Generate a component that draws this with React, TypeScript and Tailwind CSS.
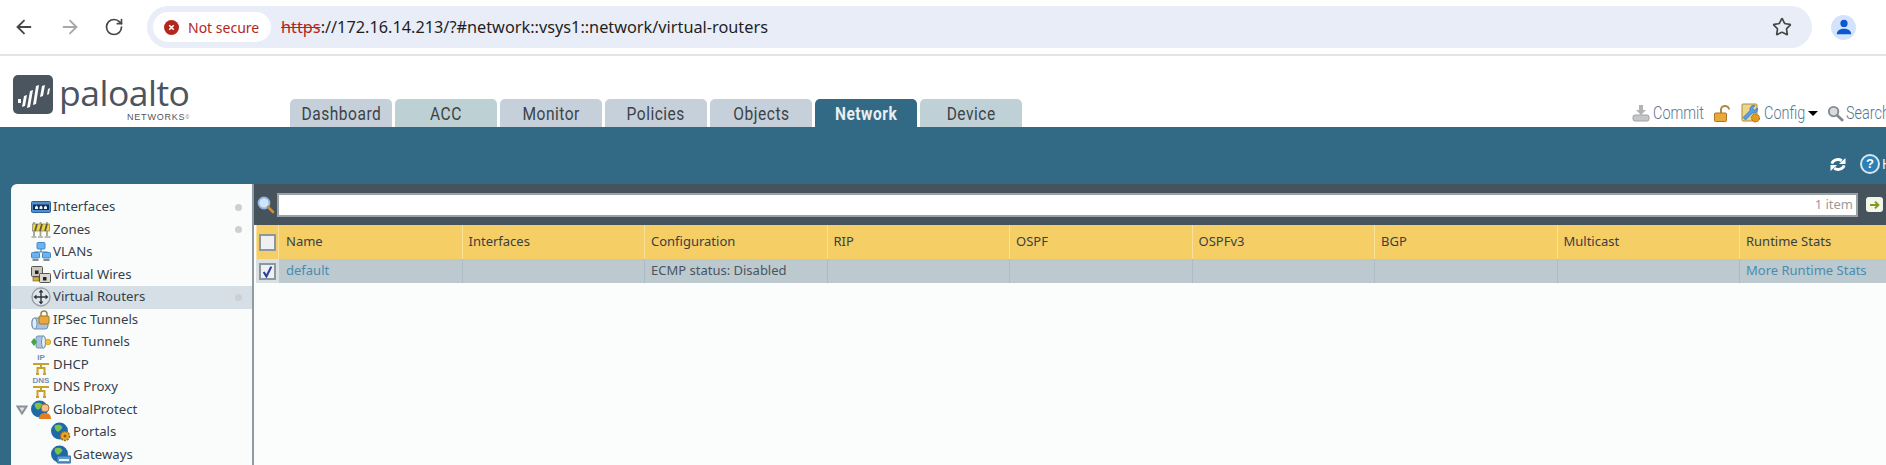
import type { ReactNode } from "react";
import { ArrowLeft, ArrowRight, RotateCw, Star } from "lucide-react";

const tabs = [
  { label: "Dashboard", bg: "bg-[#c5d0da]" },
  { label: "ACC", bg: "bg-[#bdd0d4]" },
  { label: "Monitor", bg: "bg-[#c5d0da]" },
  { label: "Policies", bg: "bg-[#c5d0da]" },
  { label: "Objects", bg: "bg-[#c5d0da]" },
  { label: "Network", bg: "bg-[#326985]", active: true },
  { label: "Device", bg: "bg-[#bfd0d6]" },
];

const columns = ["Interfaces", "Configuration", "RIP", "OSPF", "OSPFv3", "BGP", "Multicast", "Runtime Stats"];

function InterfacesIcon() {
  return (
    <svg viewBox="0 0 20 12" className="h-[12px] w-[20px]">
      <rect x="0.5" y="0.5" width="19" height="11" rx="1" fill="#4f8fd0" stroke="#2a5f9c" />
      <rect x="2" y="3.5" width="16" height="5.5" fill="#0f2d55" />
      <path d="M4 8V6l1.500-1.500L7 6v2zM8.500 8V6L10 4.500 11.500 6v2zM13 8V6l1.500-1.500L16 6v2z" fill="#eef3f8" />
    </svg>
  );
}

function ZonesIcon() {
  return (
    <svg viewBox="0 0 20 17" className="h-[17px] w-[20px]">
      <path d="M3 1v14M9.500 1v14M16 1v14" stroke="#a3a38e" strokeWidth="1.800" />
      <rect x="1.500" y="3" width="17" height="7" fill="#f0d43e" stroke="#8d8d78" strokeWidth="0.800" />
      <path d="M6 3 4 10M11 3 9 10M16 3l-2 7" stroke="#5a5a4c" strokeWidth="1.800" />
      <path d="M0.500 16h5M7 16h5M13.500 16h6" stroke="#a8a896" strokeWidth="1.600" />
    </svg>
  );
}

function VlansIcon() {
  return (
    <svg viewBox="0 0 20 20" className="h-[20px] w-[20px]">
      <path d="M10 6v4M4 13v-3h12v3" stroke="#5a7ea8" strokeWidth="1.200" fill="none" />
      <rect x="6" y="0.500" width="8" height="6.500" rx="1" fill="#6bb4f0" stroke="#4488c8" />
      <rect x="0.500" y="10.500" width="8" height="5.500" rx="1" fill="#6bb4f0" stroke="#4488c8" />
      <rect x="11.500" y="10.500" width="8" height="5.500" rx="1" fill="#6bb4f0" stroke="#4488c8" />
      <path d="M1.500 18h6M12.500 18h6" stroke="#8a8a8a" strokeWidth="1.800" />
    </svg>
  );
}

function WiresIcon() {
  return (
    <svg viewBox="0 0 20 17" className="h-[17px] w-[20px]">
      <rect x="0.500" y="0.500" width="11" height="10" rx="1" fill="#c8c8c0" stroke="#55554f" />
      <rect x="8.500" y="7.500" width="11" height="9" rx="1" fill="#d8d8d0" stroke="#55554f" />
      <path d="M4 8V4.500h3.500V8z" fill="#222" />
      <path d="M12 14.500V11h3.500v3.500z" fill="#222" />
      <rect x="2" y="11" width="6" height="4" fill="#d8ae3c" stroke="#6b5a20" strokeWidth="0.600" />
    </svg>
  );
}

function RoutersIcon() {
  return (
    <svg viewBox="0 0 20 20" className="h-[20px] w-[20px]">
      <circle cx="10" cy="10" r="9" fill="#e3e7ea" stroke="#98a2ab" strokeWidth="1.400" />
      <path d="M10 4v12M4 10h12" stroke="#2a3742" strokeWidth="1.400" />
      <path d="m10 2.500 2.500 3h-5zM10 17.500l2.500-3h-5zM2.500 10l3-2.500v5zM17.500 10l-3-2.500v5z" fill="#2a3742" />
    </svg>
  );
}

function IpsecIcon() {
  return (
    <svg viewBox="0 0 20 20" className="h-[20px] w-[20px]">
      <rect x="1" y="8" width="16" height="11" rx="3" fill="#a9c4e0" stroke="#6d8db0" />
      <ellipse cx="3.500" cy="13.500" rx="2.500" ry="5.500" fill="#e2edf7" stroke="#6d8db0" />
      <path d="M10 6V4a3 3 0 0 1 6 0v2" fill="none" stroke="#a08348" strokeWidth="1.500" />
      <rect x="8" y="6" width="10" height="8" rx="1" fill="#e8a93a" stroke="#a87520" />
    </svg>
  );
}

function GreIcon() {
  return (
    <svg viewBox="0 0 20 14" className="h-[14px] w-[20px]">
      <rect x="5" y="1" width="9" height="12" rx="2" fill="#a9c4e0" stroke="#7391b2" />
      <ellipse cx="12.500" cy="7" rx="2" ry="6" fill="#e5eef7" stroke="#7391b2" />
      <path d="M0 7l3-4 3 4-3 4z" fill="#3fa648" />
      <circle cx="17" cy="7" r="2.800" fill="#f0c030" stroke="#b98a10" strokeWidth="0.600" />
    </svg>
  );
}

function ServiceIcon({ label }: { label: string }) {
  return (
    <div className="flex w-[20px] flex-col items-center">
      <span className="text-[8px] leading-[8px] font-bold text-[#6e8fb5] font-['Liberation_Sans',sans-serif]">{label}</span>
      <svg viewBox="0 0 20 13" className="h-[13px] w-[20px]">
        <path d="M2 2h16M10 2v3M5 12h3M12 12h3M6.500 12V6h7v6" stroke="#c9a02a" strokeWidth="2" fill="none" />
      </svg>
    </div>
  );
}

function GlobeBase({ children }: { children?: ReactNode }) {
  return (
    <svg viewBox="0 0 20 20" className="h-[20px] w-[20px]">
      <circle cx="8.500" cy="9" r="8.500" fill="#1d6aa8" />
      <path d="M4 3.500c3-1.500 6-1 7 1s-1 2.500-2 4-3 1.500-4 0-2-3.500-1-5z" fill="#7fc14a" />
      {children}
    </svg>
  );
}

function GlobalProtectIcon() {
  return (
    <GlobeBase>
      <circle cx="14" cy="8" r="4" fill="#f3c08c" stroke="#a86a2a" />
      <path d="M8 19c0-5 3-6 6-6s6 1 6 6z" fill="#e77b1f" />
    </GlobeBase>
  );
}

function PortalsIcon() {
  return (
    <GlobeBase>
      <circle cx="14" cy="14" r="4.500" fill="#e9a92e" stroke="#9c6a14" strokeDasharray="2 1" strokeWidth="1.500" />
      <circle cx="14" cy="14" r="1.500" fill="#8a5c10" />
    </GlobeBase>
  );
}

function GatewaysIcon() {
  return (
    <GlobeBase>
      <rect x="6" y="11" width="14" height="7" rx="1" fill="#5b9bd2" stroke="#2d6699" />
      <rect x="8" y="14" width="10" height="2" fill="#eef4fa" />
    </GlobeBase>
  );
}

const navItems: { label: string; icon: ReactNode; dot?: boolean; selected?: boolean; sub?: boolean; open?: boolean }[] = [
  { label: "Interfaces", icon: <InterfacesIcon />, dot: true },
  { label: "Zones", icon: <ZonesIcon />, dot: true },
  { label: "VLANs", icon: <VlansIcon /> },
  { label: "Virtual Wires", icon: <WiresIcon /> },
  { label: "Virtual Routers", icon: <RoutersIcon />, dot: true, selected: true },
  { label: "IPSec Tunnels", icon: <IpsecIcon /> },
  { label: "GRE Tunnels", icon: <GreIcon /> },
  { label: "DHCP", icon: <ServiceIcon label="IP" /> },
  { label: "DNS Proxy", icon: <ServiceIcon label="DNS" /> },
  { label: "GlobalProtect", icon: <GlobalProtectIcon />, open: true },
  { label: "Portals", icon: <PortalsIcon />, sub: true },
  { label: "Gateways", icon: <GatewaysIcon />, sub: true },
];

function MagnifierIcon() {
  return (
    <svg viewBox="0 0 18 18" className="h-[18px] w-[18px]">
      <circle cx="7" cy="7" r="5.500" fill="#cfe6fa" stroke="#8fb7dc" strokeWidth="1.800" />
      <path d="m11 11 5 5" stroke="#c98f3c" strokeWidth="2.600" strokeLinecap="round" />
    </svg>
  );
}

function Checkbox({ checked }: { checked?: boolean }) {
  return (
    <div className="flex h-[17px] w-[17px] items-center justify-center border-2 border-[#8d979e] bg-[#eef0f2]">
      {checked && (
        <svg viewBox="0 0 12 12" className="h-[13px] w-[13px]">
          <path d="M2.500 6.500 5 10.500 9.500 1.500" fill="none" stroke="#2b3f9e" strokeWidth="2" />
        </svg>
      )}
    </div>
  );
}

function ChromeBar() {
  return (
    <div className="flex h-[56px] shrink-0 items-center border-b-2 border-[#e4e4e4] bg-white font-['Noto_Sans',sans-serif]">
      <ArrowLeft className="ml-[13px] h-[22px] w-[22px] text-[#444746]" strokeWidth={2} />
      <ArrowRight className="ml-[24px] h-[22px] w-[22px] text-[#a8a8a8]" strokeWidth={2} />
      <RotateCw className="ml-[23px] h-[20px] w-[20px] text-[#444746]" strokeWidth={2} />
      <div className="ml-[23px] flex h-[42px] w-[1665px] items-center rounded-full bg-[#e9edf7] pl-[6px] pr-[20px]">
        <div className="flex h-[30px] w-[118px] items-center rounded-full bg-white pl-[11px]">
          <div className="flex h-[15px] w-[15px] items-center justify-center rounded-full bg-[#b3261e]">
            <svg viewBox="0 0 10 10" className="h-[9px] w-[9px]">
              <path d="m2.500 2.500 5 5M7.500 2.500l-5 5" stroke="white" strokeWidth="1.800" />
            </svg>
          </div>
          <span className="ml-[9px] text-[14px] whitespace-nowrap text-[#b3261e]">Not secure</span>
        </div>
        <div className="ml-[10px] text-[16.300px] whitespace-nowrap text-[#1f1f1f]">
          <span className="text-[#b3261e] line-through">https</span>://172.16.14.213/?#network::vsys1::network/virtual-routers
        </div>
        <Star className="ml-auto h-[20px] w-[20px] text-[#444746]" strokeWidth={2} />
      </div>
      <div className="ml-[19px] flex h-[25px] w-[25px] items-center justify-center rounded-full bg-[#d3e3fd]">
        <svg viewBox="0 0 20 20" className="h-[18px] w-[18px]">
          <circle cx="10" cy="6" r="4" fill="#0b57d0" />
          <path d="M2 18c0-4 4-6 8-6s8 2 8 6z" fill="#0b57d0" />
        </svg>
      </div>
    </div>
  );
}

function Logo() {
  return (
    <div className="relative h-full w-[290px] shrink-0">
      <svg viewBox="0 0 40 39" className="absolute top-[19px] left-[13px] h-[39px] w-[40px]">
        <rect width="40" height="39" rx="5" fill="#4a5560" />
        <path d="M5 24h3v4H5zM11 21l3-1-2 11-3 1zM17 16l3-1-3 17-3 1zM23 11l3-1-3 19-3 1zM29 11l3-1-2 11-3 1zM35 14l2-1-1 6-2 1z" fill="white" />
      </svg>
      <div className="absolute top-[17px] left-[59px] font-['Open_Sans',sans-serif] text-[35.500px] leading-[38px] font-normal tracking-[-0.5px] text-[#4a5560]">
        paloalto
      </div>
      <div className="absolute top-[56px] left-[127px] whitespace-nowrap font-['Liberation_Sans',sans-serif] text-[9px] leading-[10px] tracking-[0.8px] text-[#555]">
        NETWORKS<span className="text-[5px] align-top">©</span>
      </div>
    </div>
  );
}

function Header() {
  return (
    <div className="flex h-[71px] shrink-0 items-end bg-white">
      <Logo />
      <div className="flex gap-[3px]">
        {tabs.map((tab) => (
          <div
            key={tab.label}
            className={`flex h-[28px] w-[102px] items-center justify-center rounded-t-[5px] pt-[4px] font-['Roboto',sans-serif] text-[18.500px] tracking-[0.6px] ${tab.bg} ${tab.active ? "font-bold text-[#e8eef2]" : "text-[#3c4248]"}`}
          >
            <span className="inline-block scale-x-[0.84]">{tab.label}</span>
          </div>
        ))}
      </div>
      <div className="ml-auto flex h-[28px] items-center overflow-hidden whitespace-nowrap font-['Roboto',sans-serif] text-[19px] font-light text-[#58758f]">
        <svg viewBox="0 0 18 18" className="h-[18px] w-[18px]">
          <path d="M7 1h4v5h3l-5 5-5-5h3z" fill="#b0b4b8" />
          <rect x="1" y="11" width="16" height="6" rx="2" fill="#c4c7ca" stroke="#9ea2a6" />
        </svg>
        <span className="ml-[3px] w-[49px] origin-left scale-x-[0.76]">Commit</span>
        <svg viewBox="0 0 16 17" className="ml-[12px] h-[17px] w-[16px]">
          <path d="M7 8V4.500a4 3.500 0 0 1 8 0" fill="none" stroke="#b0884a" strokeWidth="2" />
          <rect x="0.500" y="8" width="12" height="8.500" rx="1" fill="#eaa83a" stroke="#b0741c" />
        </svg>
        <svg viewBox="0 0 19 20" className="ml-[11px] h-[20px] w-[19px]">
          <rect x="1" y="1" width="15" height="17" rx="1" fill="#ecd68e" stroke="#a88c3c" />
          <path d="M14 2.500a4 4 0 0 0-5 5L2 14.500l2.500 2.500 7-7a4 4 0 0 0 5-5l-3 2-2-1.500z" fill="#5a9de2" stroke="#2c6cb4" strokeWidth="0.600" />
          <circle cx="14.500" cy="15" r="4" fill="#e39a22" stroke="#9c6a14" strokeDasharray="2 1" />
        </svg>
        <span className="ml-[4px] w-[40px] origin-left scale-x-[0.76]">Config</span>
        <span className="ml-[4px] h-0 w-0 border-x-[5px] border-t-[5px] border-x-transparent border-t-black" />
        <svg viewBox="0 0 18 18" className="ml-[9px] h-[17px] w-[17px]">
          <circle cx="7" cy="7" r="5" fill="#d8dcdf" stroke="#85898d" strokeWidth="2" />
          <path d="m11 11 5 5" stroke="#85898d" strokeWidth="3" strokeLinecap="round" />
        </svg>
        <span className="ml-[2px] w-[40px] origin-left scale-x-[0.76]">Search</span>
      </div>
    </div>
  );
}

function Toolbar() {
  return (
    <div className="flex h-[57px] shrink-0 items-center justify-end bg-[#326985] pt-[17px]">
      <svg viewBox="0 0 18 16" className="h-[15px] w-[18px]">
        <path d="M2.500 7A6.500 5.500 0 0 1 13 4" fill="none" stroke="white" strokeWidth="3" />
        <path d="M17 1v6.500h-7z" fill="white" />
        <path d="M15.500 9A6.500 5.500 0 0 1 5 12" fill="none" stroke="white" strokeWidth="3" />
        <path d="M1 15V8.500h7z" fill="white" />
      </svg>
      <div className="ml-[13px] flex h-[20px] w-[20px] items-center justify-center rounded-full border-2 border-[#d6e6f2] bg-[#2f7fb5] font-['Liberation_Sans',sans-serif] text-[13px] font-bold text-white">
        ?
      </div>
      <span className="ml-[2px] w-[4px] overflow-hidden font-['Liberation_Sans',sans-serif] text-[14px] text-[#e8f2f8]">Help</span>
    </div>
  );
}

function Sidebar() {
  return (
    <div className="h-full w-[243px] shrink-0 rounded-tl-[6px] border-r-2 border-[#8f9aa3] bg-[#fafcfc] pt-[12px] font-['Noto_Sans',sans-serif] text-[13.200px] text-[#33414d]">
      {navItems.map((item) => (
        <div
          key={item.label}
          className={`flex h-[22.500px] items-center pr-[10px] ${item.sub ? "pl-[40px]" : item.open ? "pl-[5px]" : "pl-[20px]"} ${item.selected ? "bg-[#d5dfe5]" : ""}`}
        >
          {item.open && (
            <svg viewBox="0 0 12 10" className="h-[10px] w-[15px] shrink-0 pr-[3px]">
              <path d="M1.500 1.500h9L6 8.500z" fill="#dfe3e5" stroke="#8a9297" strokeWidth="2" />
            </svg>
          )}
          <div className="flex w-[22px] shrink-0 items-center justify-start">{item.icon}</div>
          <span className="whitespace-nowrap">{item.label}</span>
          {item.dot && <span className="ml-auto h-[7px] w-[7px] rounded-full bg-[#cdd0d2]" />}
        </div>
      ))}
    </div>
  );
}

function FilterBar() {
  return (
    <div className="flex h-[41px] shrink-0 items-center bg-[#46525c] pl-[3px]">
      <MagnifierIcon />
      <div className="ml-[2px] flex h-[24px] w-[1581px] items-center justify-end border-2 border-[#9aa2a8] bg-white pr-[3px] font-['Noto_Sans',sans-serif] text-[13px] text-[#9b9b9b]">
        1 item
      </div>
      <div className="ml-[8px] flex h-[15px] w-[17px] items-center justify-center rounded-[3px] bg-[#f3f6e8]">
        <svg viewBox="0 0 14 12" className="h-[10px] w-[12px]">
          <path d="M1 6h10M7 2l4 4-4 4" fill="none" stroke="#7f9a1c" strokeWidth="2.400" />
        </svg>
      </div>
    </div>
  );
}

function Grid() {
  return (
    <div className="flex-1 bg-[#fbfcfc] pl-[2px] font-['Noto_Sans',sans-serif] text-[13px]">
      <div className="flex h-[34px] items-center bg-[#f5ce66] text-[#3a4044]">
        <div className="flex h-full w-[23px] shrink-0 items-center justify-center border-x border-[#fbe29a]">
          <Checkbox />
        </div>
        <div className="flex h-full w-[182.500px] shrink-0 items-center pl-[7px]">Name</div>
        {columns.map((col) => (
          <div key={col} className="flex h-full w-[182.500px] shrink-0 items-center border-l border-[#fbe29a] pl-[6px] whitespace-nowrap">
            {col}
          </div>
        ))}
      </div>
      <div className="flex h-[24px] items-center bg-[#bcc9cf] text-[#4a5560]">
        <div className="flex h-full w-[23px] shrink-0 items-center justify-center bg-[#d8e0e4]">
          <Checkbox checked />
        </div>
        <div className="flex h-full w-[182.500px] shrink-0 items-center pl-[7px] text-[#4a8cb0]">default</div>
        {columns.map((col) => (
          <div key={col} className="flex h-full w-[182.500px] shrink-0 items-center border-l border-[#adbcc4] pl-[6px] whitespace-nowrap">
            {col === "Configuration" && "ECMP status: Disabled"}
            {col === "Runtime Stats" && <span className="text-[#4a8cb0]">More Runtime Stats</span>}
          </div>
        ))}
      </div>
    </div>
  );
}

export default function App() {
  return (
    <div className="relative flex h-[465px] w-[1886px] flex-col overflow-hidden bg-white">
      <ChromeBar />
      <Header />
      <Toolbar />
      <div className="relative flex min-h-0 flex-1 bg-[#326985] pl-[11px]">
        <Sidebar />
        <div className="flex min-w-0 flex-1 flex-col">
          <FilterBar />
          <Grid />
        </div>
      </div>
    </div>
  );
}
